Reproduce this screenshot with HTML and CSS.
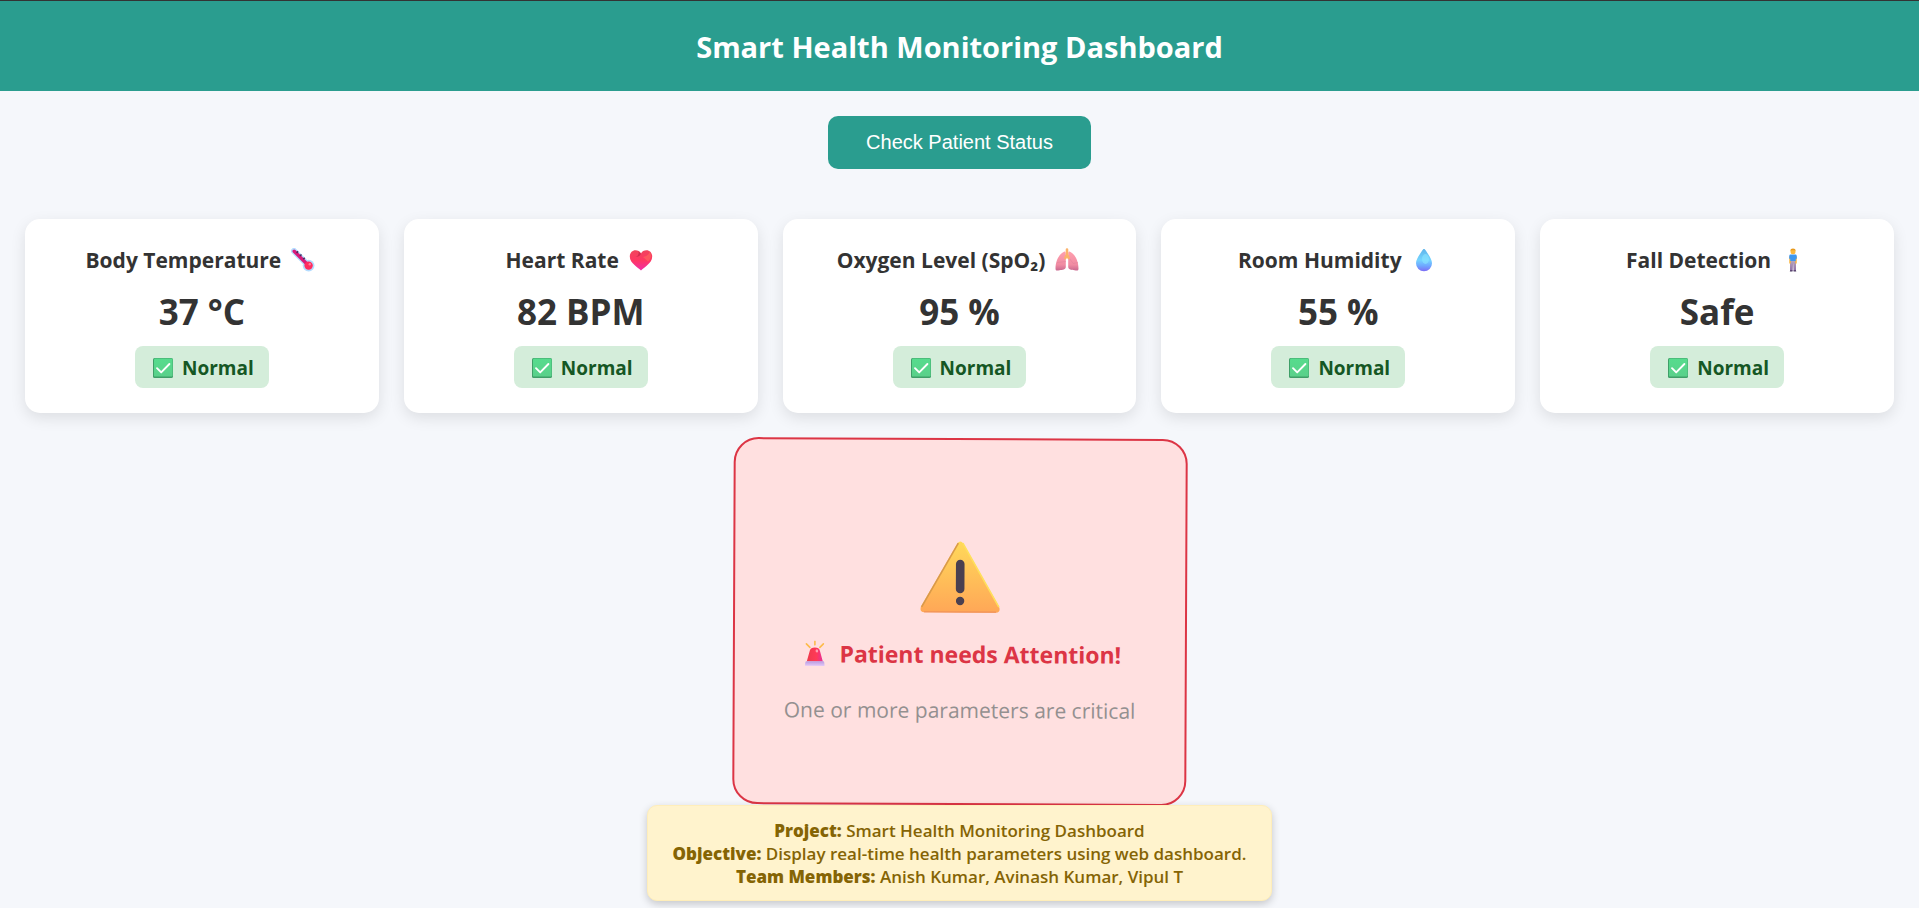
FILE: index.html
```html
<!DOCTYPE html>
<html lang="en">
<head>
<meta charset="utf-8">
<meta name="viewport" content="width=device-width, initial-scale=1">
<title>Smart Health Monitoring Dashboard</title>
<link rel="stylesheet" href="styles.css">
</head>
<body>
<svg class="defs" width="0" height="0" aria-hidden="true">
  <defs>
    <linearGradient id="g-check" x1="0" y1="0" x2="0" y2="1"><stop offset="0" stop-color="#56dc8d"/><stop offset="1" stop-color="#5ad08a"/></linearGradient>
    <linearGradient id="g-heart" x1="0" y1="0" x2="0" y2="1"><stop offset="0" stop-color="#f0455c"/><stop offset=".5" stop-color="#ff3763"/><stop offset="1" stop-color="#f02ea8"/></linearGradient>
    <linearGradient id="g-drop" x1="0" y1="0" x2="0" y2="1"><stop offset="0" stop-color="#5fb4ea"/><stop offset=".5" stop-color="#74d4ff"/><stop offset=".75" stop-color="#6fa8ff"/><stop offset="1" stop-color="#7d6cf5"/></linearGradient>
    <linearGradient id="g-lung" x1="0" y1="0" x2="0" y2="1"><stop offset="0" stop-color="#ff9fae"/><stop offset=".7" stop-color="#f08ba2"/><stop offset="1" stop-color="#c9688f"/></linearGradient>
    <linearGradient id="g-warn" x1="0" y1="0" x2="0" y2="1"><stop offset="0" stop-color="#ffd95a"/><stop offset="1" stop-color="#ffa757"/></linearGradient>
    <linearGradient id="g-legs" x1="0" y1="0" x2="0" y2="1"><stop offset="0" stop-color="#b7a3bd"/><stop offset="1" stop-color="#8d6fa6"/></linearGradient>
    <linearGradient id="g-siren" x1="0" y1="0" x2="1" y2="0"><stop offset="0" stop-color="#ee3a4c"/><stop offset=".6" stop-color="#ff3a57"/><stop offset="1" stop-color="#e8309a"/></linearGradient>
    <linearGradient id="g-base" x1="0" y1="0" x2="0" y2="1"><stop offset="0" stop-color="#b79be0"/><stop offset="1" stop-color="#e3c8f7"/></linearGradient>
    <symbol id="check" viewBox="0 0 20 20">
      <rect width="20" height="20" rx="1.6" fill="#3f9f68"/>
      <rect x="1" y="0.6" width="18.6" height="18" rx="1.2" fill="url(#g-check)"/>
      <path d="M4 10.2l4.2 4.2L16.4 6" fill="none" stroke="#fff" stroke-width="1.9" stroke-linecap="round" stroke-linejoin="round"/>
    </symbol>
  </defs>
</svg>

<header class="header">
  <h1 class="header-title">Smart Health Monitoring Dashboard</h1>
</header>

<main class="main">
  <button class="check-button" type="button">Check Patient Status</button>

  <section class="cards" aria-label="Health parameters">
    <article class="card">
      <h2 class="card-title">Body Temperature
        <svg class="card-icon" viewBox="0 0 24 24" aria-hidden="true">
          <path d="M3 3l14 14" stroke="#b3dcff" stroke-width="6" stroke-linecap="round"/>
          <circle cx="17.6" cy="17.6" r="5.9" fill="#b3dcff"/>
          <path d="M3.2 3.2l13 13" stroke="#d81b7a" stroke-width="3.4" stroke-linecap="round"/>
          <circle cx="17.6" cy="17.6" r="4.2" fill="#ff2c60"/>
          <circle cx="18.8" cy="16.2" r="1.2" fill="#ff7d98"/>
          <path d="M5.6 4.9l1.5-1.5M9 8l1.5-1.5M12.2 11.2l1.5-1.5" stroke="#4a2a5c" stroke-width="1.6"/>
        </svg>
      </h2>
      <p class="card-value">37 °C</p>
      <p class="badge"><svg class="badge-icon" aria-hidden="true"><use href="#check"/></svg>Normal</p>
    </article>
    <article class="card">
      <h2 class="card-title">Heart Rate
        <svg class="card-icon" viewBox="0 0 24 24" aria-hidden="true">
          <path d="M12 22.500C9 19 .8 15.400 .8 8.400 .8 4.600 3.400 2.200 6.500 2.200c2.400 0 4.500 1.200 5.500 3.200 1-2 3.100-3.200 5.500-3.200 3.100 0 5.700 2.400 5.700 6.200 0 7-8.200 10.600-11.200 14.100z" fill="url(#g-heart)"/>
          <path d="M12 5.400C11.200 8 9 9 6.500 9c2.500-.8 3.500-2.600 3-5.500z" fill="#b91f44" opacity=".6"/>
          <path d="M14 9c3.500-.5 6-2.500 6.600-5 2.500 3 1.400 7-1.600 9.500z" fill="#ff6a5c" opacity=".6"/>
        </svg>
      </h2>
      <p class="card-value">82 BPM</p>
      <p class="badge"><svg class="badge-icon" aria-hidden="true"><use href="#check"/></svg>Normal</p>
    </article>
    <article class="card">
      <h2 class="card-title">Oxygen Level (SpO₂)
        <svg class="card-icon" viewBox="0 0 24 24" aria-hidden="true">
          <path d="M9.500 3.500C5 5 .5 12 .5 20.500c0 2.500 1.500 2.200 4 1.800 3-.5 6.300-.8 6.300-3.300V6c0-1.600-.4-2.700-1.300-2.500z" fill="url(#g-lung)"/>
          <path d="M14.500 3.500c4.500 1.500 9 8.500 9 17 0 2.500-1.500 2.200-4 1.800-3-.5-6.300-.8-6.300-3.300V6c0-1.600.4-2.700 1.300-2.500z" fill="url(#g-lung)"/>
          <path d="M2 14.500l8.800-1M13.200 9l5 6.500 4.800-1" fill="none" stroke="#e2839c" stroke-width=".6"/>
          <path d="M12 1.500v5.500M12 6.500l-1.600 3.500M12 6.500l1.600 3.500" fill="none" stroke="#fbb26a" stroke-width="2.600" stroke-linecap="round"/>
        </svg>
      </h2>
      <p class="card-value">95 %</p>
      <p class="badge"><svg class="badge-icon" aria-hidden="true"><use href="#check"/></svg>Normal</p>
    </article>
    <article class="card">
      <h2 class="card-title">Room Humidity
        <svg class="card-icon" viewBox="0 0 24 24" aria-hidden="true">
          <path d="M12 1c.8 0 1.200.6 1.800 1.600C16.500 7 20 11 20 15.300a8 8 0 0 1-16 0C4 11 7.500 7 10.200 2.600 10.800 1.600 11.200 1 12 1z" fill="url(#g-drop)"/>
          <ellipse cx="13.500" cy="11" rx="3.500" ry="5" fill="#8be4ff" opacity=".6"/>
        </svg>
      </h2>
      <p class="card-value">55 %</p>
      <p class="badge"><svg class="badge-icon" aria-hidden="true"><use href="#check"/></svg>Normal</p>
    </article>
    <article class="card">
      <h2 class="card-title">Fall Detection
        <svg class="card-icon" viewBox="0 0 24 24" aria-hidden="true">
          <path d="M9 13h6v10h-2.400l-.5-8-.5 8H9z" fill="url(#g-legs)"/>
          <path d="M9.200 22.200h2.300v1.300H8.800zM12.600 22.200h2.300l.4 1.300h-2.700z" fill="#4d3a63"/>
          <path d="M8.300 8.500h1.400v7H8.300zM14.300 8.500h1.400v7h-1.400z" fill="#f9b233"/>
          <path d="M8.200 8.200c0-1.200.6-1.700 1.800-1.700h4c1.200 0 1.800.5 1.800 1.700v2.600h-1V13H9.200v-2.200h-1z" fill="#3f97ee"/>
          <circle cx="12" cy="3.700" r="2.500" fill="#fbb83d"/>
          <path d="M9.400 3.200c0-2 1-2.600 2.600-2.600s2.600.6 2.600 2.600l-1-1h-3.200z" fill="#e79a1e"/>
        </svg>
      </h2>
      <p class="card-value">Safe</p>
      <p class="badge"><svg class="badge-icon" aria-hidden="true"><use href="#check"/></svg>Normal</p>
    </article>
  </section>

  <section class="alert" role="alert">
    <svg class="alert-icon" viewBox="0 0 80 72" aria-hidden="true">
      <path d="M37 2.500q3-4 6 0l36 63q2 5.500-3 6H4q-5-.5-3-6z" fill="url(#g-warn)"/>
      <path d="M38 2.200L1.600 66" fill="none" stroke="#d99a4a" stroke-width="1.600"/>
      <path d="M42.500 2.200L78.800 66" fill="none" stroke="#ffe05c" stroke-width="1.600"/>
      <path d="M4 71h72" stroke="#f0925a" stroke-width="1.200"/>
      <path d="M40 23v25" stroke="#4a4050" stroke-width="8.600" stroke-linecap="round"/>
      <circle cx="40" cy="60" r="4.200" fill="#4a4050"/>
    </svg>
    <h2 class="alert-title">
      <svg class="siren-icon" viewBox="0 0 20 26" aria-hidden="true">
        <path d="M10 1v3.500M1.500 3.500L5 7M18.500 3.500L15 7" stroke="#fdbb4a" stroke-width="1.600" stroke-linecap="round"/>
        <path d="M2 21L4.900 10.500Q5.800 7.200 10 7.200t5.100 3.300L18 21z" fill="url(#g-siren)"/>
        <ellipse cx="12" cy="10.500" rx="1.300" ry="1.600" fill="#ff9db0"/>
        <path d="M1.600 20.800h16.800q1.400 0 1.400 4.700H.2q0-4.700 1.400-4.700z" fill="url(#g-base)"/>
      </svg>Patient needs Attention!</h2>
    <p class="alert-text">One or more parameters are critical</p>
  </section>

  <footer class="note">
    <p class="note-line"><strong class="note-label">Project:</strong> Smart Health Monitoring Dashboard</p>
    <p class="note-line"><strong class="note-label">Objective:</strong> Display real-time health parameters using web dashboard.</p>
    <p class="note-line"><strong class="note-label">Team Members:</strong> Anish Kumar, Avinash Kumar, Vipul T</p>
  </footer>
</main>
</body>
</html>
```
FILE: styles.css
```css
* {
  box-sizing: border-box;
}

body {
  margin: 0;
  background: #f5f7fb;
  color: #333;
  font-family: "Open Sans", "Noto Sans", sans-serif;
}

h1, h2, p {
  margin: 0;
}

.defs {
  position: absolute;
}

.header {
  padding: 26px 20px 24px;
  border-top: 1px solid #333;
  background: #2a9d8f;
  color: #fff;
  text-align: center;
}

.header-title {
  font-size: 29px;
  font-weight: 700;
  line-height: 40px;
}

.main {
  display: flex;
  flex-direction: column;
  align-items: center;
  padding: 25px 25px 7px;
}

.check-button {
  padding: 14px 38px;
  border: 0;
  border-radius: 10px;
  background: #2a9d8f;
  color: #fff;
  font-family: "Liberation Sans", Arial, sans-serif;
  font-size: 20px;
  line-height: 25px;
  cursor: pointer;
}

.cards {
  display: grid;
  grid-template-columns: repeat(auto-fit, minmax(300px, 1fr));
  gap: 25px;
  width: 100%;
  margin: 50px 0 25px;
}

.card {
  display: flex;
  flex-direction: column;
  align-items: center;
  gap: 12px;
  padding: 25px;
  border-radius: 15px;
  background: #fff;
  box-shadow: 0 5px 15px rgba(0, 0, 0, 0.1);
}

.card-title {
  display: flex;
  align-items: center;
  gap: 10px;
  padding-right: 3px;
  font-size: 21px;
  font-weight: 700;
  line-height: 32px;
}

.card-icon {
  width: 24px;
  height: 24px;
}

.card-value {
  padding-top: 2px;
  font-size: 35px;
  font-weight: 700;
  line-height: 44px;
}

.badge {
  display: flex;
  align-items: center;
  gap: 9px;
  padding: 7px 15px 5px 18px;
  border-radius: 8px;
  background: #d4edda;
  color: #155724;
  font-size: 19px;
  font-weight: 700;
  line-height: 30px;
}

.badge-icon {
  width: 20px;
  height: 20px;
}

.alert {
  display: flex;
  flex-direction: column;
  align-items: center;
  gap: 24px;
  width: 100%;
  max-width: 454px;
  padding: 101px 20px 78px;
  border: 2px solid #dc3545;
  border-radius: 25px;
  background: #ffe0e0;
  text-align: center;
  transform: rotate(0.25deg);
}

.alert-icon {
  width: 80px;
  height: 72px;
}

.alert-title {
  display: flex;
  align-items: center;
  gap: 15px;
  padding-left: 6px;
  color: #dc3545;
  font-size: 23px;
  font-weight: 700;
  line-height: 34px;
}

.siren-icon {
  width: 20px;
  height: 26px;
}

.alert-text {
  color: #949090;
  font-size: 21px;
  line-height: 30px;
}

.note {
  position: relative;
  padding: 13px 25px 12px;
  border: 1px solid #ffeeba;
  border-radius: 10px;
  background: #fff3cd;
  box-shadow: 0 3px 8px rgba(0, 0, 0, 0.2);
  color: #856404;
  font-size: 17px;
  font-weight: 600;
  line-height: 23px;
  text-align: center;
}

.note-label {
  font-weight: 800;
}
```
